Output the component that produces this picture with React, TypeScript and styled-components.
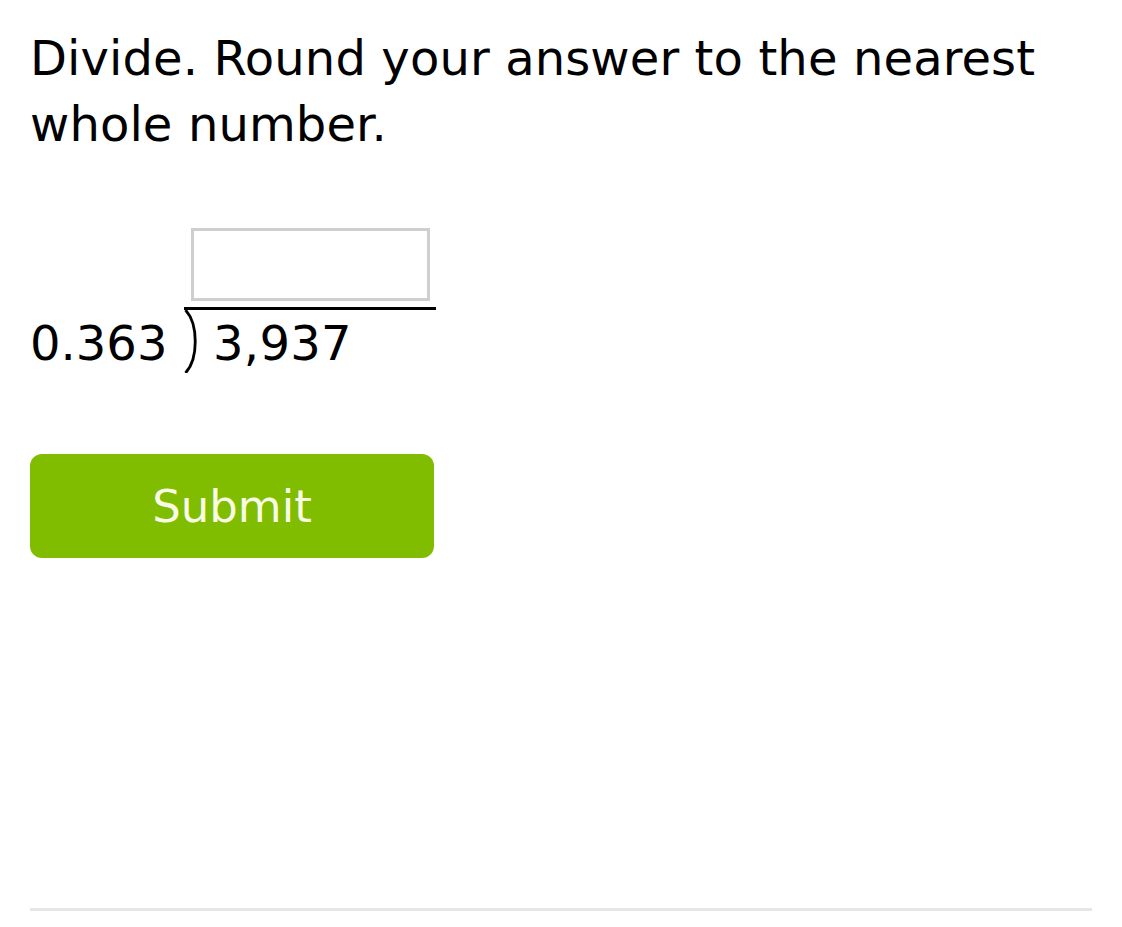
import React from "react";
import styled, { createGlobalStyle } from "styled-components";

const GlobalStyle = createGlobalStyle`
  html, body {
    margin: 0;
    padding: 0;
    background: #ffffff;
  }
  body {
    font-family: "DejaVu Sans", Verdana, sans-serif;
    color: #000000;
  }
`;

const Page = styled.div`
  padding: 25px 30px 0 30px;
  display: flex;
  flex-direction: column;
`;

const Prompt = styled.div`
  font-size: 48px;
  line-height: 66px;
  letter-spacing: 0.12px;
  margin: 0;
`;

const DivisionRow = styled.div`
  display: flex;
  align-items: flex-end;
  margin-top: 71px;
  gap: 18px;
`;

const Divisor = styled.div`
  font-size: 48px;
  line-height: 66px;
  width: 136px;
`;

const RightColumn = styled.div`
  display: flex;
  flex-direction: column;
`;

const AnswerBox = styled.input`
  box-sizing: border-box;
  width: 239px;
  height: 73px;
  margin: 0 0 6px 7px;
  border: 3px solid #cfcfcf;
  border-radius: 0;
  background: #ffffff;
  outline: none;
  font-family: inherit;
  font-size: 40px;
  padding: 0 10px;
`;

const DividendRow = styled.div`
  display: flex;
  align-items: flex-start;
  width: 252px;
  border-top: 3px solid #000000;
`;

const Bracket = styled.svg`
  width: 14px;
  height: 63px;
  flex: none;
`;

const Dividend = styled.div`
  font-size: 48px;
  line-height: 66px;
  letter-spacing: 0.3px;
  margin-left: 15px;
`;

const SubmitButton = styled.button`
  margin-top: 78px;
  width: 404px;
  height: 104px;
  border: none;
  border-radius: 12px;
  background: #80bd00;
  color: #f8fce4;
  font-family: "DejaVu Sans", Verdana, sans-serif;
  font-size: 45px;
  line-height: 1;
  padding: 0;
  cursor: pointer;
`;

const Divider = styled.hr`
  margin: 350px 0 0 0;
  height: 3px;
  border: none;
  background: #e6e6e6;
  width: 1062px;
`;

export default function App() {
  return (
    <>
      <GlobalStyle />
      <Page>
        <Prompt>
          Divide. Round your answer to the nearest
          <br />
          whole number.
        </Prompt>
        <DivisionRow>
          <Divisor>0.363</Divisor>
          <RightColumn>
            <AnswerBox type="text" aria-label="answer" />
            <DividendRow>
              <Bracket viewBox="0 0 14 63">
                <path
                  d="M1.5 0 C 14.5 14, 14.5 49, 1.5 63"
                  fill="none"
                  stroke="#000"
                  strokeWidth="2.8"
                />
              </Bracket>
              <Dividend>3,937</Dividend>
            </DividendRow>
          </RightColumn>
        </DivisionRow>
        <div>
          <SubmitButton>Submit</SubmitButton>
        </div>
        <Divider />
      </Page>
    </>
  );
}
